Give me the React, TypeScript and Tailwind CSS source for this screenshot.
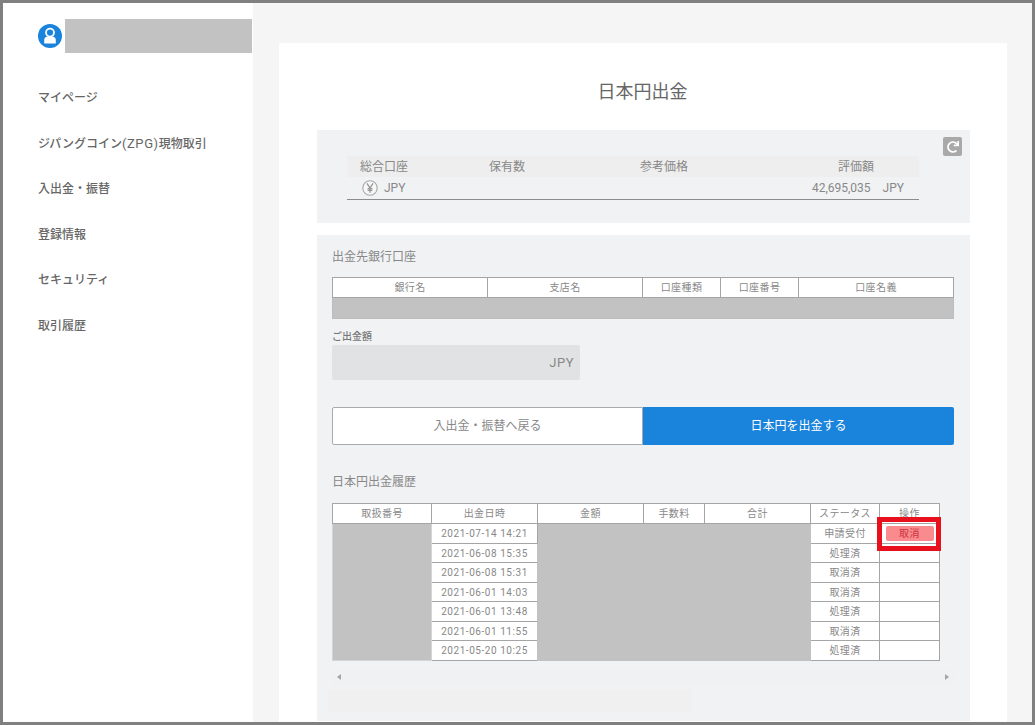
import { FaRedo } from 'react-icons/fa';

const font = { fontFamily: '"Roboto", "Noto Sans CJK JP", sans-serif' };

const bankColumns = [
  { label: '銀行名', width: 'w-[155px]' },
  { label: '支店名', width: 'w-[155px]' },
  { label: '口座種類', width: 'w-[78px]' },
  { label: '口座番号', width: 'w-[78px]' },
  { label: '口座名義', width: 'w-[155px]' },
];

const historyColumns = [
  { label: '取扱番号', width: 'w-[99px]' },
  { label: '出金日時', width: 'w-[106px]' },
  { label: '金額', width: 'w-[106px]' },
  { label: '手数料', width: 'w-[61px]' },
  { label: '合計', width: 'w-[106px]' },
  { label: 'ステータス', width: 'w-[69px]' },
  { label: '操作', width: 'w-[60px]' },
];

const historyRows = [
  { date: '2021-07-14 14:21', status: '申請受付', height: 'h-[20px]' },
  { date: '2021-06-08 15:35', status: '処理済', height: 'h-[19px]' },
  { date: '2021-06-08 15:31', status: '取消済', height: 'h-[20px]' },
  { date: '2021-06-01 14:03', status: '取消済', height: 'h-[19px]' },
  { date: '2021-06-01 13:48', status: '処理済', height: 'h-[20px]' },
  { date: '2021-06-01 11:55', status: '取消済', height: 'h-[19px]' },
  { date: '2021-05-20 10:25', status: '処理済', height: 'h-[20px]' },
];

function UserIcon() {
  return (
    <svg viewBox="0 0 24 24" className="h-[24px] w-[24px] shrink-0">
      <circle cx="12" cy="12" r="12" fill="#1a83dc" />
      <circle cx="12" cy="8.6" r="4" fill="none" stroke="#fff" strokeWidth="1.8" />
      <path d="M6.2 19.5v-3.6c0-2 1.6-3.4 3.6-3.4h4.4c2 0 3.6 1.4 3.6 3.4v3.6z" fill="#fff" />
    </svg>
  );
}

function YenIcon() {
  return (
    <svg viewBox="0 0 16 16" className="h-[16px] w-[16px] shrink-0">
      <circle cx="8" cy="8" r="7.2" fill="#f7f7f7" stroke="#a8a8a8" strokeWidth="1.1" />
      <path d="M5 3.4 8 8l3-4.6M8 8v4.8M5.6 8.6h4.8M5.6 10.4h4.8" fill="none" stroke="#969696" strokeWidth="1.3" />
    </svg>
  );
}

function Sidebar() {
  const item = 'h-[18px] text-[12px] font-medium leading-[18px] text-[#666]';
  return (
    <aside className="w-[250px] shrink-0 bg-white">
      <div className="mt-[16px] flex items-center gap-[3px] pl-[35px]">
        <UserIcon />
        <div className="h-[34px] w-[187px] bg-[#c2c2c2]" />
      </div>
      <nav className="mt-[36px] flex flex-col gap-[27.6px] pl-[35px]">
        <a className={item}>マイページ</a>
        <a className={item}>
          ジパングコイン<span className="text-[13px] font-normal tracking-[0.6px]">(ZPG)</span>現物取引
        </a>
        <a className={item}>入出金・振替</a>
        <a className={item}>登録情報</a>
        <a className={item}>セキュリティ</a>
        <a className={item}>取引履歴</a>
      </nav>
    </aside>
  );
}

function SummaryPanel() {
  return (
    <section className="bg-[#f1f2f4] pb-[23px] pl-[30px] pr-[8px] pt-[7px]">
      <div className="flex justify-end">
        <div className="flex h-[19px] w-[19px] items-center justify-center rounded-[2px] bg-[#a9a9a9] text-white">
          <FaRedo className="h-[12px] w-[12px]" />
        </div>
      </div>
      <div className="mr-[43px] border-b border-[#8c8c8c] text-[12px] text-[#888]">
        <div className="flex h-[21px] items-center bg-[#eeeeee]">
          <span className="ml-[13px] w-[129px]">総合口座</span>
          <span className="w-[151px]">保有数</span>
          <span className="w-[198px]">参考価格</span>
          <span>評価額</span>
        </div>
        <div className="flex h-[22px] items-center">
          <div className="ml-[15px] flex items-center gap-[6px]">
            <YenIcon />
            <span>JPY</span>
          </div>
          <span className="ml-auto">42,695,035</span>
          <span className="ml-[12px] mr-[15px]">JPY</span>
        </div>
      </div>
    </section>
  );
}

function BankTable() {
  return (
    <table className="w-[621px] table-fixed border-collapse bg-white text-[10px] tracking-[0.4px] text-[#888]">
      <colgroup>
        {bankColumns.map((col) => (
          <col key={col.label} className={col.width} />
        ))}
      </colgroup>
      <thead>
        <tr className="h-[20px]">
          {bankColumns.map((col) => (
            <th key={col.label} className="border border-[#a5a5a5] p-0 text-center font-normal">
              {col.label}
            </th>
          ))}
        </tr>
      </thead>
      <tbody>
        <tr className="h-[21px]">
          <td colSpan={5} className="border border-[#bdbdbd] bg-[#c2c2c2] p-0" />
        </tr>
      </tbody>
    </table>
  );
}

function HistoryTable() {
  return (
    <table className="w-[607px] table-fixed border-collapse bg-white text-[10px] tracking-[0.4px] text-[#888]">
      <colgroup>
        {historyColumns.map((col) => (
          <col key={col.label} className={col.width} />
        ))}
      </colgroup>
      <thead>
        <tr className="h-[20px]">
          {historyColumns.map((col) => (
            <th key={col.label} className="border border-[#a5a5a5] p-0 text-center font-normal">
              {col.label}
            </th>
          ))}
        </tr>
      </thead>
      <tbody>
        {historyRows.map((row, i) => (
          <tr key={row.date} className={row.height}>
            {i === 0 && <td rowSpan={7} className="border border-[#d5d5d5] bg-[#c2c2c2] p-0" />}
            <td className="border border-[#a5a5a5] p-0 text-center tracking-[0.55px]">{row.date}</td>
            {i === 0 && <td rowSpan={7} colSpan={3} className="border border-[#c2c2c2] bg-[#c2c2c2] p-0" />}
            <td className="border border-[#a5a5a5] p-0 text-center">{row.status}</td>
            <td className="relative border border-[#a5a5a5] p-0">
              {i === 0 && (
                <>
                  <button className="mx-auto block h-[15px] w-[48px] rounded-[2px] bg-[#f98b8f] text-[10px] leading-[15px] text-[#d0323c]">
                    取消
                  </button>
                  <div className="absolute -bottom-[8px] -left-[3px] -right-[2px] -top-[7px] border-[5px] border-[#e8101c]" />
                </>
              )}
            </td>
          </tr>
        ))}
      </tbody>
    </table>
  );
}

function WithdrawPanel() {
  return (
    <section className="mt-[12px] bg-[#f1f2f4] px-[15px] pb-[9px] pt-[13px]">
      <h2 className="h-[18px] text-[12px] font-normal leading-[18px] text-[#888]">出金先銀行口座</h2>
      <div className="mt-[11px]">
        <BankTable />
      </div>
      <label className="mt-[10px] block h-[16px] text-[10px] font-medium leading-[15px] text-[#777]">ご出金額</label>
      <div className="flex h-[35px] w-[248px] items-center justify-end rounded-[2px] bg-[#e1e2e4] pr-[6px] text-[13px] tracking-[0.5px] text-[#888]">
        JPY
      </div>
      <div className="mt-[27px] flex h-[38px] w-[622px] text-[12px]">
        <button className="w-[311px] rounded-l-[2px] border border-[#aaa] bg-white text-[#888]">入出金・振替へ戻る</button>
        <button className="w-[311px] rounded-r-[2px] bg-[#1a83dc] text-white">日本円を出金する</button>
      </div>
      <h2 className="mt-[28px] h-[18px] text-[12px] font-normal leading-[18px] text-[#888]">日本円出金履歴</h2>
      <div className="mt-[12px]">
        <HistoryTable />
      </div>
      <div className="mt-[8px] flex h-[16px] w-[622px] items-center justify-between bg-[#f0f1f2] px-[5px]">
        <span className="h-0 w-0 border-y-[3px] border-r-[4px] border-y-transparent border-r-[#a5a5a5]" />
        <span className="h-0 w-0 border-y-[3px] border-l-[4px] border-y-transparent border-l-[#a5a5a5]" />
      </div>
      <div className="-ml-[4px] mt-[4px] h-[23px] w-[364px] bg-[#f0f0f0]" />
    </section>
  );
}

export default function App() {
  return (
    <div style={font} className="flex h-[725px] w-[1035px] overflow-hidden border-[3px] border-[#808080] bg-white">
      <Sidebar />
      <main className="min-w-0 flex-1 bg-[#f5f5f5] pl-[26px] pr-[25px] pt-[40px]">
        <div className="h-[700px] bg-white pl-[38px] pr-[37px]">
          <h1 className="flex h-[87px] items-center justify-center pr-[2px] pt-[9px] text-[18px] font-normal text-[#666]">日本円出金</h1>
          <SummaryPanel />
          <WithdrawPanel />
        </div>
      </main>
    </div>
  );
}
